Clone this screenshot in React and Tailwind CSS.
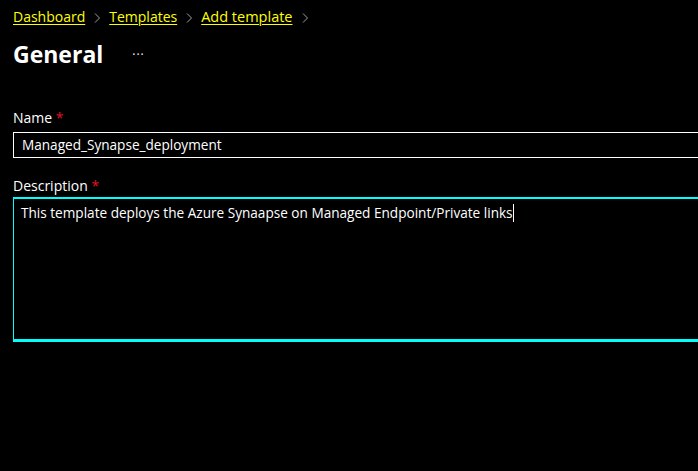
import React from 'react';

const Crumb = ({ children }) => (
  <a href="#" className="text-[#ffff00] underline underline-offset-2 decoration-1">
    {children}
  </a>
);

const Chevron = () => (
  <svg width="12" height="12" viewBox="0 0 12 12" className="mx-[6px] mt-[2px]">
    <path d="M4 1.5 L8.5 6 L4 10.5" stroke="#a0a0a0" strokeWidth="1" fill="none" />
  </svg>
);

export default function App() {
  return (
    <div className="w-[698px] h-[471px] bg-black text-white overflow-hidden" style={{ fontFamily: '"Segoe UI", "Open Sans", "Noto Sans", sans-serif' }}>
      <div className="pl-[13px] pt-[7px]">
        <nav className="flex items-center text-[14px] leading-[20px]">
          <Crumb>Dashboard</Crumb>
          <Chevron />
          <Crumb>Templates</Crumb>
          <Chevron />
          <span className="text-[14.5px]"><Crumb>Add template</Crumb></span>
          <Chevron />
        </nav>

        <div className="flex items-center mt-[11px] h-[32px]">
          <h1 className="text-[23px] font-bold leading-[32px]">General</h1>
          <span className="ml-[29px] text-[12px] tracking-[1px] text-white mt-[2px]">···</span>
        </div>

        <div className="mt-[38px]">
          <label className="block text-[14px] leading-[20px]">
            Name <span className="text-[#e81123]">*</span>
          </label>
          <div className="mt-[4px] h-[26px] border border-white flex items-center pl-[8px] w-[800px] text-[13.6px]">
            Managed_Synapse_deployment
          </div>
        </div>

        <div className="mt-[18px]">
          <label className="block text-[14px] leading-[20px]">
            Description <span className="text-[#e81123]">*</span>
          </label>
          <div className="mt-[1px] h-[145px] w-[800px] border-l border-t-2 border-b-[3px] border-[#00ffff] pl-[7px] pt-[4px] text-[13.6px] leading-[20px]">
            <span>This template deploys the Azure Synaapse on Managed Endpoint/Private links</span>
            <span className="inline-block w-px h-[18px] bg-white align-middle -mt-[2px]" />
          </div>
        </div>
      </div>
    </div>
  );
}
